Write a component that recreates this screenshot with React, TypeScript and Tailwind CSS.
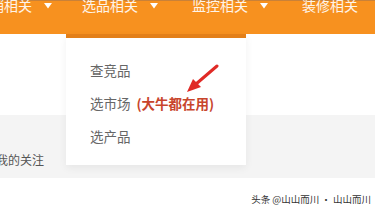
import React from "react";

const NAV = [
  { label: "营销相关", arrow: true, width: "w-[106px]" },
  { label: "选品相关", arrow: true, width: "w-[110px]" },
  { label: "监控相关", arrow: true, width: "w-[110px]" },
  { label: "装修相关", arrow: false, width: "w-[110px]" },
];

const MENU = ["查竞品", "选市场", "选产品"];

function Caret() {
  return (
    <svg width="8" height="6" viewBox="0 0 8 6" className="shrink-0">
      <path d="M0 0h8L4 5.5z" fill="#ffffff" />
    </svg>
  );
}

export default function App() {
  return (
    <div
      className="relative w-[375px] h-[210px] overflow-hidden bg-white"
      style={{ fontFamily: '"Noto Sans CJK SC", "Noto Sans", sans-serif' }}
    >
      <header className="h-[34px] bg-[#f7911f] border-t border-[#c98138]">
        <nav className="flex items-start ml-[-24px]">
          {NAV.map((item) => (
            <div
              key={item.label}
              className={`${item.width} shrink-0 flex items-center gap-[12px] text-[14px] leading-[11px] text-white/90`}
            >
              <span className="-mt-[1px]">{item.label}</span>
              {item.arrow && <Caret />}
            </div>
          ))}
        </nav>
      </header>

      <div className="h-[81px]" />

      <section className="h-[63px] bg-[#f4f4f4] flex items-end pb-[11px]">
        <span className="ml-[-4px] text-[12px] leading-[14px] text-[#555]">我的关注</span>
      </section>

      <footer className="flex justify-end pr-[4px] pt-[15px]">
        <span className="text-[9.5px] leading-[12px] text-[#333]">头条 @山山而川 · 山山而川</span>
      </footer>

      {/* dropdown under 选品相关 */}
      <div className="absolute left-[66px] top-[34px] w-[180px] h-[131px] bg-white border-t-[4px] border-[#e37f18] shadow-[0_3px_8px_rgba(0,0,0,0.06)]">
        <ul className="pt-[25px] pl-[24px] flex flex-col gap-[19px] text-[13.5px] leading-[14px] text-[#666]">
          {MENU.map((m) => (
            <li key={m} className="flex items-center">
              {m}
              {m === "选市场" && (
                <span className="ml-[6px] font-bold text-[#c8452c]">(大牛都在用)</span>
              )}
            </li>
          ))}
        </ul>
      </div>

      {/* red pointer arrow */}
      <svg
        className="absolute left-[184px] top-[64px]"
        width="36"
        height="32"
        viewBox="0 0 36 32"
      >
        <path d="M33 2 L12 20" stroke="#e02a26" strokeWidth="3" strokeLinecap="round" />
        <path d="M3 28 L9 15 L17 23 Z" fill="#e02a26" />
      </svg>
    </div>
  );
}
